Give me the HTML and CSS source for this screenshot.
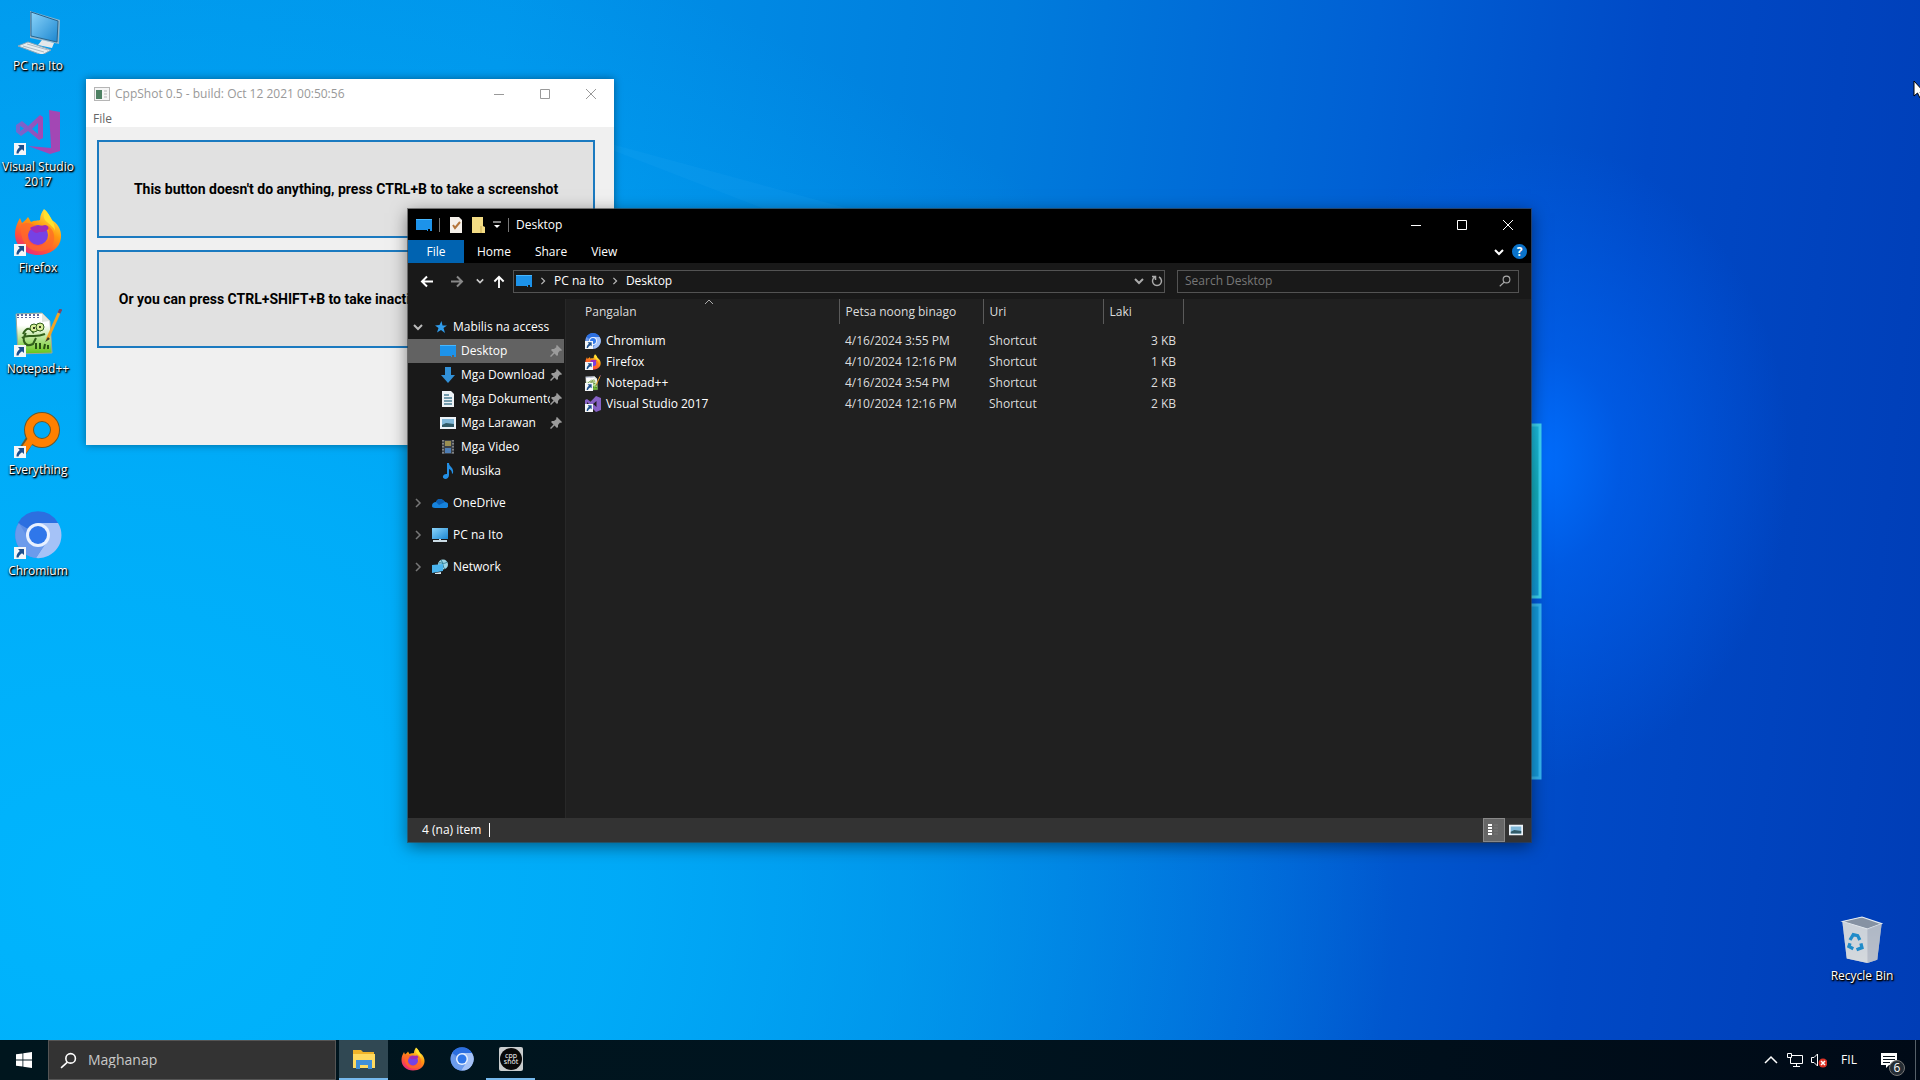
FILE: index.html
```html
<!DOCTYPE html>
<html lang="fil">
<head>
  <meta charset="UTF-8">
  <meta name="viewport" content="width=device-width, initial-scale=1.0">
  <title>Desktop</title>
  <link rel="stylesheet" href="styles.css">
</head>
<body>
  <!-- shared icons -->
  <svg class="sprite" aria-hidden="true">
    <defs>
      <linearGradient id="g-screen" x1="0" y1="0" x2="1" y2="1"><stop offset="0" stop-color="#8bd4fa"/><stop offset="1" stop-color="#1b86d0"/></linearGradient>
      <linearGradient id="g-fox" x1="0.8" y1="0" x2="0.2" y2="1"><stop offset="0" stop-color="#fff44f"/><stop offset="0.4" stop-color="#ff980e"/><stop offset="0.7" stop-color="#ff5634"/><stop offset="1" stop-color="#e3208b"/></linearGradient>
      <linearGradient id="g-note" x1="0" y1="0" x2="0" y2="1"><stop offset="0.3" stop-color="#fff"/><stop offset="1" stop-color="#62c413"/></linearGradient>
      <linearGradient id="g-bin" x1="0" y1="0" x2="0" y2="1"><stop offset="0" stop-color="#b9c6d6"/><stop offset="1" stop-color="#e2e2e4"/></linearGradient>
      <linearGradient id="g-old" x1="0" y1="0" x2="1" y2="0"><stop offset="0" stop-color="#6f6bd0"/><stop offset="1" stop-color="#a347b4"/></linearGradient>
      <linearGradient id="g-pane" x1="0" y1="0" x2="0" y2="1"><stop offset="0" stop-color="#1cc0e4"/><stop offset="0.4" stop-color="#14b3c4"/><stop offset="1" stop-color="#129ee0"/></linearGradient>
    </defs>
    <symbol id="shortcut" viewBox="0 0 12 12">
      <rect width="12" height="12" fill="#f4f6f8"/>
      <path d="M4 2h6v6L8 6.200C6 7.500 5 8.500 4.500 10.500H2.500C2.300 8 3.500 6 5.800 4Z" fill="#1d4f8c"/>
    </symbol>
    <symbol id="pc" viewBox="0 0 48 48">
      <path d="M16 5 46 14 45 38 16 32Z" fill="#8fb6cc"/>
      <path d="M17 6 44 15 43 36 17 30Z" fill="url(#g-screen)" stroke="#28638c"/>
      <path d="M28 34 40 37 38 42 24 39Z" fill="#e3e8ea"/>
      <path d="M4 40 14 36 37 44 28 49Z" fill="#e6edf0" stroke="#8ba7b8"/>
      <path d="M9 40 30 46M13 38 34 44" stroke="#a9bac4"/>
    </symbol>
    <symbol id="vs-old" viewBox="0 0 48 48">
      <path d="M35 3 46 5V44L36 47 14 39 37 41Z" fill="#a347b4"/>
      <path fill-rule="evenodd" d="M2 18 8 14 14 19 26 8 29 10V31L25 33 14 24 7 29 2 25ZM6 19V24L10 21.500ZM24 16 18 22 24 27Z" fill="url(#g-old)"/>
    </symbol>
    <symbol id="vs" viewBox="0 0 16 16">
      <path fill-rule="evenodd" d="M11 0 16 2V14L11 16 5.500 10.500 2 13 0 12V4L2 3 5.500 5.700ZM11.500 5 8 8 11.500 11ZM2 6V10L4 8Z" fill="#8661c5"/>
    </symbol>
    <symbol id="firefox" viewBox="0 0 48 48">
      <path d="M30 1C34 4 36 8 37 12 43 14 48 22 47 30 46 40 36 47 24 47 11 47 1 38 1 26 1 20 3 15 6 10L8 15C10 13 12 12 14 9L17 14C20 12 24 13 26 12 26 7 28 4 30 1Z" fill="url(#g-fox)"/>
      <circle cx="24" cy="27" r="10" fill="#7542e5"/>
      <path d="M7 17C14 13 20 16 23 20 19 20 15 22 14 26 12 33 17 38 25 38 33 37 37 31 35 23L32 17C41 20 43 33 36 40 23 48 5 41 7 17Z" fill="#ff6a2a" opacity="0.700"/>
      <path d="M16 20C20 17 25 19 31 17 34 17 36 21 33 22 30 25 26 23 23 25 20 25 18 22 16 20Z" fill="#a02bb8"/>
      <path d="M31 2C36 8 41 14 41 23 40 19 36 17 33 14 29 11 29 6 31 2Z" fill="#ffe22e"/>
    </symbol>
    <symbol id="notepad" viewBox="0 0 48 48">
      <path d="M2 5 28 4 36 12 38 44 4 45Z" fill="url(#g-note)" stroke="#9aa69a"/>
      <path d="M28 4v9l8-1Z" fill="#dfe6df"/>
      <path d="M4 5V9M8 5V9M12 5V9M16 5V9M20 5V9M24 5V9" stroke="#5a68a0" stroke-width="2" stroke-dasharray="2 1"/>
      <path d="M9 25C13 17 17 20 19 23 23 13 29 17 26 22M8 29C14 24 19 30 31 25M12 24C7 31 11 39 19 35L22 29" fill="none" stroke="#31601a" stroke-width="2"/>
      <circle cx="20" cy="19" r="4" fill="#d7ed9b" stroke="#31601a"/><circle cx="26" cy="18" r="4" fill="#d7ed9b" stroke="#31601a"/>
      <circle cx="20" cy="19" r="1"/><circle cx="26" cy="18" r="1"/>
      <path d="M22 40V34M26 40V34M30 40 31 35M34 40V36" stroke="#285312" stroke-width="2"/>
      <path d="M45 4 33 31" stroke="#f0a326" stroke-width="3"/>
      <path d="M45 4 47 0" stroke="#7c4a67" stroke-width="3"/><path d="M34 28 31 33 36 30Z" fill="#3a3a22"/>
    </symbol>
    <symbol id="everything" viewBox="0 0 48 48">
      <path d="M17 28 8 42" stroke="#69582b" stroke-width="9"/>
      <circle cx="28" cy="20" r="13" fill="none" stroke="#69582b" stroke-width="10"/>
      <circle cx="28" cy="20" r="13" fill="none" stroke="#ff8000" stroke-width="8"/>
      <path d="M19 27 8 43" stroke="#ff8000" stroke-width="7"/>
    </symbol>
    <symbol id="chromium" viewBox="0 0 48 48">
      <circle cx="24" cy="24" r="23" fill="#5c8ee8"/>
      <path d="M24 24 4 12A23 23 0 0 1 44 12Z" fill="#2c6fe0"/>
      <path d="M24 12H44A23 23 0 0 1 22 47L34 29Z" fill="#a5c2f7"/>
      <path d="M5 12A23 23 0 0 0 22 47L32 31 15 29Z" fill="#6b9bec"/>
      <circle cx="24" cy="24" r="12" fill="#e8f1ff"/><circle cx="24" cy="24" r="9" fill="#2f77ea"/>
    </symbol>
    <symbol id="bin" viewBox="0 0 40 44">
      <path d="M2 5 6 39 25 43 34 40 38 7 20 1Z" fill="url(#g-bin)"/>
      <path d="M2 5 20 1 38 7 25 12Z" fill="#8592a3" stroke="#e6edf4"/>
      <path d="M2 5 6 39 25 43V12Z" fill="#cfd4da" opacity="0.700"/>
      <path d="M25 12 38 7 34 40 25 43Z" fill="#a7afbd" opacity="0.700"/>
      <path d="M9 22 12 17 16 18 18 22M19 25 20 29 15 31M12 30 8 28 9 25" fill="none" stroke="#1f8bc9" stroke-width="3"/>
    </symbol>
    <symbol id="desktop" viewBox="0 0 16 12">
      <path d="M0 0H16V12H14V10H12V12H11V11H0Z" fill="#1d93ea"/>
      <path d="M0 0.500H16" stroke="#47b7ff"/>
    </symbol>
    <symbol id="pin" viewBox="0 0 12 12">
      <path d="M7 0 12 5 11 6 10 5.500 8 8 8 10 7 11 4.500 8.500 1 12 0 11 3.500 7.500 1 5 2 4 4 4 6.500 2 6 1Z" fill="#9b9b9b"/>
    </symbol>
    <symbol id="chev-down" viewBox="0 0 10 10"><path d="M1 3 5 7 9 3" fill="none" stroke="currentColor" stroke-width="2"/></symbol>
    <symbol id="chev-right" viewBox="0 0 10 10"><path d="M3 1 7 5 3 9" fill="none" stroke="currentColor" stroke-width="1.500"/></symbol>
    <symbol id="picture" viewBox="0 0 16 12">
      <rect width="16" height="12" fill="#edf3f8"/><rect x="2" y="2" width="12" height="8" fill="#80b8d9"/><path d="M2 8 6 6 14 7V10H2Z" fill="#315b68"/>
    </symbol>
    <symbol id="min" viewBox="0 0 12 12"><path d="M1 6.500H11" stroke="currentColor"/></symbol>
    <symbol id="max" viewBox="0 0 12 12"><path d="M1.500 1.500H10.500V10.500H1.500Z" fill="none" stroke="currentColor"/></symbol>
    <symbol id="close" viewBox="0 0 12 12"><path d="M1 1 11 11M11 1 1 11" stroke="currentColor"/></symbol>
    <symbol id="search" viewBox="0 0 16 16"><circle cx="10" cy="6" r="4.500" fill="none" stroke="currentColor" stroke-width="1.500"/><path d="M7 9.500 1 15" stroke="currentColor" stroke-width="1.500"/></symbol>
  </svg>

  <main class="desktop">
    <svg class="wallpaper" viewBox="0 0 1920 1040" preserveAspectRatio="none" aria-hidden="true">
      <path d="M560 130 1000 300 850 209Z" fill="#4cc4ff" opacity="0.080"/>
      <path d="M1500 425H1540V597H1500Z" fill="url(#g-pane)" stroke="#3fd8f4" stroke-width="3"/>
      <path d="M1500 605H1540V778H1500Z" fill="#159fe2" stroke="#37b9f5" stroke-width="3"/>
    </svg>

    <nav class="shortcuts">
      <a class="icon" href="#pc-na-ito"><svg><use href="#pc"/></svg><span>PC na Ito</span></a>
      <a class="icon" href="#visual-studio"><svg><use href="#vs-old"/></svg><svg class="arrow"><use href="#shortcut"/></svg><span>Visual Studio 2017</span></a>
      <a class="icon" href="#firefox-app"><svg><use href="#firefox"/></svg><svg class="arrow"><use href="#shortcut"/></svg><span>Firefox</span></a>
      <a class="icon" href="#notepad-app"><svg><use href="#notepad"/></svg><svg class="arrow"><use href="#shortcut"/></svg><span>Notepad++</span></a>
      <a class="icon" href="#everything-app"><svg><use href="#everything"/></svg><svg class="arrow"><use href="#shortcut"/></svg><span>Everything</span></a>
      <a class="icon" href="#chromium-app"><svg><use href="#chromium"/></svg><svg class="arrow"><use href="#shortcut"/></svg><span>Chromium</span></a>
    </nav>
    <a class="icon recycle" href="#recycle"><svg><use href="#bin"/></svg><span>Recycle Bin</span></a>

    <section class="window cppshot">
      <header class="titlebar">
        <svg class="app-icon" viewBox="0 0 16 14"><rect x="0.500" y="0.500" width="15" height="13" fill="#f5f5f5" stroke="#b5b5b5"/><rect x="2" y="3" width="6" height="9" fill="#4d8062"/><path d="M10 4H13M10 7H13M10 10H13" stroke="#b5b5b5"/></svg>
        <h1>CppShot 0.5 - build: Oct 12 2021 00:50:56</h1>
        <div class="controls">
          <button aria-label="Minimize"><svg><use href="#min"/></svg></button>
          <button aria-label="Maximize"><svg><use href="#max"/></svg></button>
          <button aria-label="Close"><svg><use href="#close"/></svg></button>
        </div>
      </header>
      <div class="menubar"><button>File</button></div>
      <div class="actions">
        <button>This button doesn't do anything, press CTRL+B to take a screenshot</button>
        <button>Or you can press CTRL+SHIFT+B to take inactive and active screenshots</button>
      </div>
    </section>

    <section class="window explorer">
      <header class="titlebar">
        <svg class="app-icon"><use href="#desktop"/></svg>
        <i class="divider"></i>
        <svg class="quick" viewBox="0 0 14 16"><path d="M1 0H10L13 3V16H1Z" fill="#f5f0ea"/><path d="M4 8 6 11 11 5" fill="none" stroke="#b5763c" stroke-width="2"/></svg>
        <svg class="quick" viewBox="0 0 14 16"><path d="M1 0H12V9L14 10V16H1Z" fill="#f3dc84"/><path d="M10 9V16" stroke="#c9a84d"/></svg>
        <svg class="more" viewBox="0 0 8 8"><path d="M0 1H8" stroke="#fff"/><path d="M1 4H7L4 7Z" fill="#fff"/></svg>
        <i class="divider"></i>
        <h1>Desktop</h1>
        <div class="controls">
          <button aria-label="Minimize"><svg><use href="#min"/></svg></button>
          <button aria-label="Maximize"><svg><use href="#max"/></svg></button>
          <button aria-label="Close"><svg><use href="#close"/></svg></button>
        </div>
      </header>
      <div class="ribbon">
        <button class="active">File</button>
        <button>Home</button>
        <button>Share</button>
        <button>View</button>
        <button class="expand" aria-label="Expand"><svg><use href="#chev-down"/></svg></button>
        <button class="help" aria-label="Help">?</button>
      </div>
      <div class="toolbar">
        <button aria-label="Back"><svg class="nav-arrow" viewBox="0 0 14 12"><path d="M13 6H2M7 1 2 6 7 11" fill="none" stroke="#fff" stroke-width="2"/></svg></button>
        <button aria-label="Forward"><svg class="nav-arrow" viewBox="0 0 14 12"><path d="M1 6H12M7 1 12 6 7 11" fill="none" stroke="#888" stroke-width="2"/></svg></button>
        <button class="recent" aria-label="Recent"><svg><use href="#chev-down"/></svg></button>
        <button class="up" aria-label="Up"><svg class="nav-arrow" viewBox="0 0 12 14"><path d="M6 14V2M1 7 6 2 11 7" fill="none" stroke="#fff" stroke-width="2"/></svg></button>
        <div class="address">
          <svg class="app-icon"><use href="#desktop"/></svg>
          <svg class="crumb"><use href="#chev-right"/></svg>
          <a href="#pc-na-ito">PC na Ito</a>
          <svg class="crumb"><use href="#chev-right"/></svg>
          <a href="#desktop-folder">Desktop</a>
          <button class="history" aria-label="Previous locations"><svg><use href="#chev-down"/></svg></button>
          <button class="refresh" aria-label="Refresh"><svg viewBox="0 0 12 12"><path d="M8 2A4.500 4.500 0 1 1 4 2M1 1.500H4.500V5" fill="none" stroke="#aaa" stroke-width="1.500"/></svg></button>
        </div>
        <label class="find"><input type="text" placeholder="Search Desktop" aria-label="Search Desktop"><svg><use href="#search"/></svg></label>
      </div>
      <div class="content">
        <nav class="sidebar">
          <a class="group" href="#quick"><svg class="chev light"><use href="#chev-down"/></svg><svg class="pic" viewBox="0 0 16 16"><path d="M9.500 2 10.500 6.500 15 6.500 11.500 9 13 14 9 11 5 13.500 6.500 9 3 6.500 7.500 6Z" fill="#2f9bea"/></svg><span>Mabilis na access</span></a>
          <a class="selected" href="#d"><svg class="pic"><use href="#desktop"/></svg><span>Desktop</span><svg class="pin"><use href="#pin"/></svg></a>
          <a href="#dl"><svg class="pic" viewBox="0 0 16 16"><path d="M5 0H11V8H15L8 16 1 8H5Z" fill="#3291d8"/></svg><span>Mga Download</span><svg class="pin"><use href="#pin"/></svg></a>
          <a href="#doc"><svg class="pic" viewBox="0 0 16 16"><path d="M2 0H11L14 3V16H2Z" fill="#edf2f5"/><path d="M4 4H9M4 7H12M4 10H12M4 13H12" stroke="#4b7f94" stroke-width="1.500"/></svg><span>Mga Dokumento</span><svg class="pin"><use href="#pin"/></svg></a>
          <a href="#pic"><svg class="pic"><use href="#picture"/></svg><span>Mga Larawan</span><svg class="pin"><use href="#pin"/></svg></a>
          <a href="#vid"><svg class="pic" viewBox="0 0 16 16"><rect x="2" y="1" width="12" height="14" fill="#3c4147"/><path d="M3 1V15M13 1V15" stroke="#999" stroke-width="1.500" stroke-dasharray="1.500 1.500"/><rect x="5" y="2" width="6" height="5" fill="#9a8f52"/><rect x="5" y="9" width="6" height="5" fill="#4e7eb5"/></svg><span>Mga Video</span></a>
          <a href="#mus"><svg class="pic" viewBox="0 0 16 16"><path d="M7 0H9C9 4 14 4 13 10L12 11C12 8 11 7 9 6V12C9 17 2 17 3 13 4 11 6 11 7 11Z" fill="#238fe5"/></svg><span>Musika</span></a>
          <a class="group" href="#one"><svg class="chev"><use href="#chev-right"/></svg><svg class="pic" viewBox="0 0 16 16"><path d="M0 11C0 8 2 7 4 7 5 4 8 3 11 5L13 7C16 7 17 10 16 12 15 13 14 13 13 13H3C1 13 0 12 0 11Z" fill="#1683dd"/><path d="M4 7C5 4 8 3 11 5L13 7 7 10Z" fill="#0b5fb3"/></svg><span>OneDrive</span></a>
          <a class="group" href="#pc-tree"><svg class="chev"><use href="#chev-right"/></svg><svg class="pic" viewBox="0 0 16 16"><rect y="1" width="16" height="11" fill="url(#g-screen)"/><path d="M7 12H9V13H15V15H1V13H7Z" fill="#cbdce5"/></svg><span>PC na Ito</span></a>
          <a class="group" href="#net"><svg class="chev"><use href="#chev-right"/></svg><svg class="pic" viewBox="0 0 16 16"><circle cx="11" cy="5.500" r="5" fill="#9cd5e6"/><path d="M7 4C10 3 11 6 15 3M9 1C12 4 10 8 13 10" fill="none" stroke="#2f8199"/><path d="M0 6 11 5V12L0 14Z" fill="#49b4ee"/><path d="M3 14 9 13V15H3Z" fill="#d7e7ee"/></svg><span>Network</span></a>
        </nav>
        <div class="files">
          <table>
            <thead>
              <tr>
                <th class="name"><svg class="sort" viewBox="0 0 10 6"><path d="M1 5 5 1 9 5" fill="none" stroke="#aaa"/></svg>Pangalan</th>
                <th class="date">Petsa noong binago</th>
                <th class="type">Uri</th>
                <th class="size">Laki</th>
              </tr>
            </thead>
            <tbody>
              <tr><td><span class="file"><svg><use href="#chromium"/></svg><svg class="arrow"><use href="#shortcut"/></svg>Chromium</span></td><td>4/16/2024 3:55 PM</td><td>Shortcut</td><td>3 KB</td></tr>
              <tr><td><span class="file"><svg><use href="#firefox"/></svg><svg class="arrow"><use href="#shortcut"/></svg>Firefox</span></td><td>4/10/2024 12:16 PM</td><td>Shortcut</td><td>1 KB</td></tr>
              <tr><td><span class="file"><svg><use href="#notepad"/></svg><svg class="arrow"><use href="#shortcut"/></svg>Notepad++</span></td><td>4/16/2024 3:54 PM</td><td>Shortcut</td><td>2 KB</td></tr>
              <tr><td><span class="file"><svg><use href="#vs"/></svg><svg class="arrow"><use href="#shortcut"/></svg>Visual Studio 2017</span></td><td>4/10/2024 12:16 PM</td><td>Shortcut</td><td>2 KB</td></tr>
            </tbody>
          </table>
        </div>
      </div>
      <footer class="statusbar">
        <span>4 (na) item</span><i class="divider"></i>
        <button class="active" aria-label="Details"><svg viewBox="0 0 14 14"><path d="M1 2H5M1 5H5M1 8H5M1 11H5" stroke="#fff" stroke-width="2"/><path d="M7 2H11M7 5H11M7 8H11M7 11H11" stroke="#777"/></svg></button>
        <button aria-label="Large icons"><svg><use href="#picture"/></svg></button>
      </footer>
    </section>

    <svg class="cursor" viewBox="0 0 12 19" aria-hidden="true"><path d="M1 1V16L4.500 13 7 18 9 17 7 12H11Z" fill="#fff" stroke="#000"/></svg>
  </main>

  <footer class="taskbar">
    <button class="start" aria-label="Start"><svg viewBox="0 0 16 16"><path d="M0 2.300 6.500 1.400V7.600H0ZM7.300 1.300 16 0V7.600H7.300ZM0 8.400H6.500V14.600L0 13.700ZM7.300 8.400H16V16L7.300 14.700Z" fill="#fff"/></svg></button>
    <label class="search"><svg><use href="#search"/></svg><input type="text" placeholder="Maghanap" aria-label="Maghanap"></label>
    <button class="task open current" aria-label="File Explorer"><svg viewBox="0 0 24 24"><path d="M1 3H9L11 5H22V21H1Z" fill="#f0b429"/><path d="M1 7H23V21H1Z" fill="#ffda5f"/><path d="M4 13H20V22H16V18H8V22H4Z" fill="#3f8fd8"/></svg></button>
    <button class="task" aria-label="Firefox"><svg><use href="#firefox"/></svg></button>
    <button class="task" aria-label="Chromium"><svg><use href="#chromium"/></svg></button>
    <button class="task open" aria-label="CppShot"><svg viewBox="0 0 24 24"><rect width="24" height="24" rx="2" fill="#c9cdce"/><circle cx="12" cy="12" r="11" fill="#080808"/><text class="logo-text" x="12" y="11">cpp</text><text class="logo-text" x="12" y="17">shot</text></svg></button>
    <div class="tray">
      <button aria-label="Hidden icons"><svg viewBox="0 0 16 16"><path d="M2 11 8 5 14 11" fill="none" stroke="#fff" stroke-width="1.500"/></svg></button>
      <button aria-label="Network"><svg viewBox="0 0 16 16"><path d="M5 3.500H15.500V11.500H3.500V6M9.500 12V14M6 14.500H13" fill="none" stroke="#fff"/><path d="M0.500 1.500H4.500V5.500H0.500Z" fill="none" stroke="#fff"/></svg></button>
      <button aria-label="Volume"><svg viewBox="0 0 16 16"><path d="M0.500 5.500H3L6.500 2V14L3 10.500H0.500Z" fill="none" stroke="#fff"/><circle cx="12" cy="11" r="4.500" fill="#dc3226"/><path d="M10 9 14 13M14 9 10 13" stroke="#fff" stroke-width="1.500"/></svg></button>
      <button class="lang">FIL</button>
      <button class="notify" aria-label="Notifications"><svg viewBox="0 0 16 16"><path d="M0 1H16V13H8L5 16V13H0Z" fill="#fff"/><path d="M2 4.500H14M2 7.500H14M2 10.500H9" stroke="#08131d"/></svg><span class="badge">6</span></button>
      <button class="show-desktop" aria-label="Show desktop"></button>
    </div>
  </footer>
</body>
</html>
```

FILE: styles.css
```css
* {
  box-sizing: border-box;
}

body {
  margin: 0;
  height: 100vh;
  display: flex;
  flex-direction: column;
  overflow: hidden;
  font-family: "Open Sans", "Noto Sans", sans-serif;
  font-size: 12px;
  line-height: 16px;
  color: #fff;
}

a {
  color: inherit;
  text-decoration: none;
}

button {
  padding: 0;
  border: none;
  background: none;
  color: inherit;
  font: inherit;
}

input {
  min-width: 0;
  flex: 1;
  padding: 0;
  border: none;
  outline: none;
  background: none;
  color: inherit;
  font: inherit;
}

h1 {
  margin: 0;
  font-size: 12px;
  font-weight: normal;
}

svg {
  display: block;
  flex: none;
}

.sprite {
  position: absolute;
  width: 0;
  height: 0;
}

/* desktop */
.desktop {
  position: relative;
  flex: 1;
  overflow: hidden;
  background:
    radial-gradient(ellipse 260px 320px at 1530px 460px, #006fff 0%, rgba(0, 100, 245, 0.6) 35%, rgba(0, 80, 220, 0) 100%),
    radial-gradient(ellipse 1300px 1000px at 5% 85%, #00b5fd 0%, rgba(0, 178, 252, 0.8) 40%, rgba(0, 140, 235, 0) 100%),
    linear-gradient(96deg, #0098ec 0%, #0094ea 25%, #007cdc 50%, #0060d4 68%, #0049c6 82%, #003db6 100%);
}

.wallpaper {
  position: absolute;
  width: 100%;
  height: 100%;
}

.shortcuts {
  position: relative;
  width: 76px;
  padding-top: 6px;
}

.icon {
  position: relative;
  display: flex;
  flex-direction: column;
  align-items: center;
  width: 76px;
  height: 101px;
  text-align: center;
  line-height: 15px;
  text-shadow: 1px 1px 2px #000, 0 1px 2px #000, 1px 1px 1px #000;
}

.icon svg {
  width: 48px;
  height: 48px;
  margin-bottom: 4px;
}

.icon .arrow {
  position: absolute;
  left: 14px;
  top: 36px;
  width: 12px;
  height: 12px;
}

.recycle {
  position: absolute;
  right: 20px;
  bottom: 23px;
}

/* windows */
.window {
  position: absolute;
  display: flex;
  flex-direction: column;
}

.titlebar {
  display: flex;
  align-items: center;
  height: 31px;
  padding-left: 8px;
}

.app-icon {
  width: 16px;
  height: 14px;
}

.controls {
  display: flex;
  margin-left: auto;
}

.controls button {
  display: flex;
  align-items: center;
  justify-content: center;
  width: 46px;
  height: 30px;
}

.controls svg {
  width: 12px;
  height: 12px;
}

.cppshot {
  left: 86px;
  top: 79px;
  width: 528px;
  height: 366px;
  background: #f0f0f0;
  color: #999;
  box-shadow: 0 0 8px rgba(0, 0, 0, 0.4);
}

.cppshot .titlebar {
  height: 29px;
  background: #fff;
}

.cppshot h1 {
  padding-left: 5px;
}

.menubar {
  padding: 3px 7px 0;
  background: #fff;
  color: #666;
}

.actions {
  display: flex;
  flex-direction: column;
  gap: 12px;
  padding: 13px 19px 0 11px;
}

.actions button {
  height: 98px;
  border: 2px solid #1b7ac0;
  background: #e1e1e1;
  color: #000;
  font: bold 14px Roboto, "Liberation Sans", sans-serif;
  white-space: nowrap;
}

.explorer {
  left: 408px;
  top: 209px;
  width: 1123px;
  height: 633px;
  background: #202020;
  box-shadow: 0 0 0 1px rgba(60, 60, 60, 0.6), 0 4px 16px rgba(0, 0, 0, 0.5);
}

.explorer .titlebar {
  background: #000;
}

.explorer .titlebar svg {
  margin-right: 7px;
}

.explorer .titlebar .controls svg {
  margin: 0;
}

.explorer .titlebar .quick {
  width: 14px;
  height: 16px;
  margin-right: 8px;
}

.titlebar .more {
  width: 8px;
  height: 8px;
}

.divider {
  width: 1px;
  height: 14px;
  margin-right: 9px;
  background: #777;
}

.titlebar h1 {
  flex: none;
}

.titlebar .divider:nth-of-type(2) {
  margin-right: 7px;
}

.ribbon {
  display: flex;
  align-items: center;
  height: 23px;
  padding-right: 4px;
  background: #000;
}

.ribbon button {
  height: 23px;
  padding: 0 12px;
}

.ribbon .active {
  width: 56px;
  margin-right: 1px;
  background: #0063b1;
}

.ribbon .expand {
  margin-left: auto;
  padding: 0 8px;
}

.ribbon .help {
  width: 15px;
  height: 15px;
  padding: 0;
  border-radius: 50%;
  background: #0a72c9;
  line-height: 15px;
  font-weight: bold;
}

.expand svg,
.recent svg,
.history svg {
  width: 10px;
  height: 10px;
}

.toolbar {
  display: flex;
  align-items: center;
  height: 36px;
  padding: 0 12px;
  background: #191919;
}

.nav-arrow {
  width: 14px;
  height: 13px;
}

.toolbar > button {
  margin-right: 16px;
}

.toolbar > button:nth-child(2) {
  margin-right: 12px;
}

.toolbar > .recent {
  color: #ccc;
  margin-right: 8px;
}

.recent svg {
  width: 8px;
  height: 8px;
}

.toolbar > .up {
  margin-right: 7px;
}

.address,
.find {
  display: flex;
  align-items: center;
  height: 23px;
  border: 1px solid #535353;
}

.address {
  flex: 1;
  padding-left: 2px;
}

.crumb {
  width: 8px;
  height: 8px;
  margin: 0 7px;
  color: #bbb;
}

.history {
  margin: 0 7px 0 auto;
  color: #aaa;
}

.refresh svg {
  width: 12px;
  height: 12px;
  margin-right: 1px;
}

.find {
  width: 342px;
  margin-left: 12px;
  padding: 0 7px;
}

.find svg {
  width: 12px;
  height: 12px;
  color: #aaa;
}

.find input::placeholder {
  color: #777;
  opacity: 1;
}

.content {
  flex: 1;
  display: flex;
  min-height: 0;
}

.sidebar {
  width: 158px;
  padding: 16px 1px 0 0;
  background: #191919;
  border-right: 1px solid #282828;
}

.sidebar a {
  display: flex;
  align-items: center;
  height: 24px;
  padding: 0 2px 0 32px;
}

.sidebar .group {
  padding-left: 5px;
  margin-top: 8px;
}

.sidebar .group:first-child {
  margin-top: 0;
}

.sidebar .selected {
  background: #626262;
}

.sidebar span {
  flex: 1;
  overflow: hidden;
  white-space: nowrap;
}

.chev {
  width: 10px;
  height: 10px;
  margin-right: 9px;
  color: #777;
}

.chev.light {
  color: #bbb;
}

.pic {
  width: 16px;
  height: 16px;
  margin-right: 5px;
}

.pin {
  width: 12px;
  height: 12px;
}

.files {
  flex: 1;
  padding-left: 13px;
}

table {
  border-collapse: collapse;
  table-layout: fixed;
  width: 604px;
}

th {
  position: relative;
  height: 25px;
  padding: 0 0 0 6px;
  border-right: 1px solid #5a5a5a;
  text-align: left;
  font-weight: normal;
  color: #ddd;
}

.sort {
  position: absolute;
  left: 48%;
  top: 0;
  width: 10px;
  height: 6px;
}

.name {
  width: 260px;
}

.date {
  width: 144px;
}

.type {
  width: 120px;
}

.size {
  width: 80px;
}

tbody::before {
  content: "";
  display: block;
  height: 6px;
}

td {
  height: 21px;
  padding: 0 0 0 6px;
  color: #ddd;
}

td:last-child {
  padding: 0 7px 0 0;
  text-align: right;
}

.file {
  position: relative;
  display: flex;
  align-items: center;
  gap: 5px;
  color: #fff;
}

.file svg {
  width: 16px;
  height: 16px;
}

.file .arrow {
  position: absolute;
  left: 0;
  bottom: 0;
  width: 8px;
  height: 8px;
}

.statusbar {
  display: flex;
  align-items: center;
  height: 24px;
  padding: 0 4px 0 14px;
  background: #333;
}

.statusbar .divider {
  margin: 0 auto 0 8px;
  background: #fff;
}

.statusbar button {
  display: flex;
  align-items: center;
  justify-content: center;
  width: 22px;
  height: 24px;
}

.statusbar .active {
  border: 1px solid #888;
  background: #666;
}

.statusbar svg {
  width: 14px;
  height: 14px;
}

.cursor {
  position: absolute;
  left: calc(100% - 7px);
  top: 80px;
  width: 12px;
  height: 19px;
}

/* taskbar */
.taskbar {
  display: flex;
  height: 40px;
  background: linear-gradient(90deg, #00161e, #00141f 50%, #000a17);
}

.start {
  width: 48px;
}

.start svg {
  width: 16px;
  height: 16px;
  margin: auto;
}

.search {
  display: flex;
  align-items: center;
  gap: 11px;
  width: 288px;
  margin-right: 3px;
  padding: 0 11px;
  border: 1px solid #555;
  background: #333;
  font-size: 14px;
}

.search svg {
  width: 17px;
  height: 17px;
}

.search input::placeholder {
  color: #c8c8c8;
  opacity: 1;
}

.task {
  width: 49px;
  border-bottom: 2px solid transparent;
}

.task svg {
  width: 24px;
  height: 24px;
  margin: auto;
}

.task.open {
  border-bottom-color: #76b9ed;
}

.current {
  background: #304853;
}

.logo-text {
  fill: #fff;
  font-size: 7px;
  text-anchor: middle;
}

.tray {
  display: flex;
  align-items: center;
  margin-left: auto;
}

.tray button {
  width: 24px;
  height: 40px;
}

.tray svg {
  width: 16px;
  height: 16px;
  margin: auto;
}

.tray .lang {
  width: 36px;
}

.tray .notify {
  position: relative;
  width: 44px;
  margin-right: 4px;
}

.badge {
  position: absolute;
  left: 22px;
  top: 20px;
  width: 16px;
  height: 16px;
  border: 1px solid #777;
  border-radius: 50%;
  background: #262d34;
  line-height: 14px;
}

.tray .show-desktop {
  width: 5px;
  border-left: 1px solid #566069;
}
```
